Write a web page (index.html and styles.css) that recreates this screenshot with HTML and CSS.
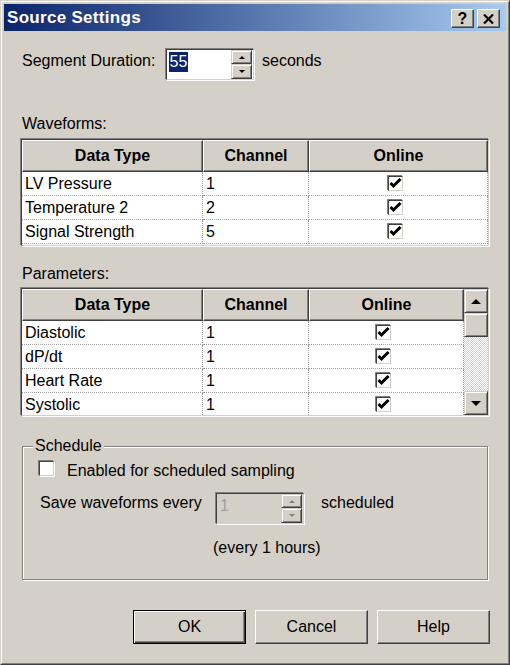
FILE: index.html
```html
<!DOCTYPE html>
<html>
<head>
<meta charset="utf-8">
<link rel="stylesheet" href="styles.css">
</head>
<body>
<div class="window">
  <div class="frame">
    <div class="titlebar">
      <span class="title">Source Settings</span>
      <div class="tbtns">
        <div class="tbtn">?</div>
        <div class="tbtn"><svg width="11" height="10" viewBox="0 0 11 10"><path d="M1 0.5 L10 9.5 M10 0.5 L1 9.5" stroke="#000" stroke-width="2.2" fill="none"/></svg></div>
      </div>
    </div>
    <div class="content">
      <div class="seg-row">
        <span class="seg-lbl">Segment Duration:</span>
        <div class="sunken spin">
          <span class="spin-val"><span class="sel">55</span></span>
          <div class="spin-btns">
            <div class="sbtn"><span class="arr-up"></span></div>
            <div class="sbtn"><span class="arr-down"></span></div>
          </div>
        </div>
        <span class="seg-unit">seconds</span>
      </div>

      <div class="section-lbl first">Waveforms:</div>
      <div class="sunken listview wave">
        <div class="hdr">
          <div class="hcell">Data Type</div>
          <div class="hcell">Channel</div>
          <div class="hcell">Online</div>
        </div>
        <div class="row"><div class="cell">LV Pressure</div><div class="cell">1</div><div class="cell chk"><span class="sunken cb"><svg width="13" height="13" viewBox="0 0 13 13"><polyline points="1.5,6 4.5,9 11.5,2" fill="none" stroke="#000" stroke-width="3"/></svg></span></div></div>
        <div class="row"><div class="cell">Temperature 2</div><div class="cell">2</div><div class="cell chk"><span class="sunken cb"><svg width="13" height="13" viewBox="0 0 13 13"><polyline points="1.5,6 4.5,9 11.5,2" fill="none" stroke="#000" stroke-width="3"/></svg></span></div></div>
        <div class="row"><div class="cell">Signal Strength</div><div class="cell">5</div><div class="cell chk"><span class="sunken cb"><svg width="13" height="13" viewBox="0 0 13 13"><polyline points="1.5,6 4.5,9 11.5,2" fill="none" stroke="#000" stroke-width="3"/></svg></span></div></div>
      </div>

      <div class="section-lbl second">Parameters:</div>
      <div class="sunken listview params">
        <div class="grid-part">
          <div class="hdr">
            <div class="hcell">Data Type</div>
            <div class="hcell">Channel</div>
            <div class="hcell">Online</div>
          </div>
          <div class="row"><div class="cell">Diastolic</div><div class="cell">1</div><div class="cell chk"><span class="sunken cb"><svg width="13" height="13" viewBox="0 0 13 13"><polyline points="1.5,6 4.5,9 11.5,2" fill="none" stroke="#000" stroke-width="3"/></svg></span></div></div>
          <div class="row"><div class="cell">dP/dt</div><div class="cell">1</div><div class="cell chk"><span class="sunken cb"><svg width="13" height="13" viewBox="0 0 13 13"><polyline points="1.5,6 4.5,9 11.5,2" fill="none" stroke="#000" stroke-width="3"/></svg></span></div></div>
          <div class="row"><div class="cell">Heart Rate</div><div class="cell">1</div><div class="cell chk"><span class="sunken cb"><svg width="13" height="13" viewBox="0 0 13 13"><polyline points="1.5,6 4.5,9 11.5,2" fill="none" stroke="#000" stroke-width="3"/></svg></span></div></div>
          <div class="row"><div class="cell">Systolic</div><div class="cell">1</div><div class="cell chk"><span class="sunken cb"><svg width="13" height="13" viewBox="0 0 13 13"><polyline points="1.5,6 4.5,9 11.5,2" fill="none" stroke="#000" stroke-width="3"/></svg></span></div></div>
          <div class="row"><div class="cell"></div><div class="cell"></div><div class="cell chk"><span class="sunken cb"></span></div></div>
        </div>
        <div class="vscroll">
          <div class="sb-btn"><span class="big-up"></span></div>
          <div class="sb-btn thumb"></div>
          <div class="track"></div>
          <div class="sb-btn"><span class="big-down"></span></div>
        </div>
      </div>

      <fieldset class="group">
        <legend>Schedule</legend>
        <div class="cb-row">
          <span class="sunken cb"></span>
          <span class="cb-lbl">Enabled for scheduled sampling</span>
        </div>
        <div class="save-row">
          <span class="save-lbl">Save waveforms every</span>
          <div class="sunken spin disabled">
            <span class="spin-val"><span class="dis-val">1</span></span>
            <div class="spin-btns">
              <div class="sbtn"><span class="arr-up dis"></span></div>
              <div class="sbtn"><span class="arr-down dis"></span></div>
            </div>
          </div>
          <span class="save-unit">scheduled</span>
        </div>
        <div class="every">(every 1 hours)</div>
      </fieldset>

      <div class="btnrow">
        <div class="btn default">OK</div>
        <div class="btn">Cancel</div>
        <div class="btn">Help</div>
      </div>
    </div>
  </div>
</div>
</body>
</html>
```

FILE: styles.css
```css
* { box-sizing: border-box; }
html, body { margin: 0; padding: 0; }
body {
  font-family: "Liberation Sans", Arial, sans-serif;
  font-size: 16px;
  line-height: 18px;
  color: #000;
  background: #d4d0c8;
}
.window {
  width: 510px;
  height: 665px;
  border: 1px solid;
  border-color: #d4d0c8 #404040 #404040 #d4d0c8;
  background: #d4d0c8;
}
.frame {
  height: 100%;
  border: 1px solid;
  border-color: #fff #808080 #808080 #fff;
  padding: 2px;
  display: flex;
  flex-direction: column;
}
.titlebar {
  height: 27px;
  flex: none;
  background: linear-gradient(to right, #0a246a, #a6caf0);
  display: flex;
  align-items: flex-start;
  padding: 0 6px 0 3px;
}
.title {
  flex: 1;
  color: #fff;
  font-weight: bold;
  font-size: 17px;
  line-height: 27px;
  letter-spacing: 0.3px;
}
.tbtns { display: flex; gap: 3px; margin-top: 5px; }
.tbtn {
  width: 23px;
  height: 19px;
  background: #d4d0c8;
  border: 1px solid;
  border-color: #fff #404040 #404040 #fff;
  box-shadow: inset -1px -1px #808080;
  display: flex;
  align-items: center;
  justify-content: center;
  font-weight: bold;
  font-size: 16px;
  line-height: 16px;
}
.content { padding: 0 16px; }

/* common bevels */
.sunken {
  border: 1px solid;
  border-color: #404040 #d4d0c8 #d4d0c8 #404040;
  box-shadow: -1px -1px #808080, 1px 1px #fff;
  margin: 1px;
  background: #fff;
}

/* segment row */
.seg-row { display: flex; align-items: flex-start; margin-top: 17px; }
.seg-lbl { width: 143px; margin-left: 2px; margin-top: 4px; white-space: nowrap; }
.seg-unit { margin-left: 7px; margin-top: 4px; }
.spin {
  width: 88px;
  height: 31px;
  display: flex;
  justify-content: space-between;
}
.spin-val { padding: 2px 0 0 2px; }
.sel {
  display: inline-block;
  background: #0a246a;
  color: #fff;
  line-height: 20px;
  padding: 0 0.5px;
}
.spin-btns {
  width: 21px;
  margin-right: 1px;
  display: flex;
  flex-direction: column;
}
.sbtn {
  background: #d4d0c8;
  border: 1px solid;
  border-color: #d4d0c8 #404040 #404040 #d4d0c8;
  box-shadow: inset 1px 1px #fff, inset -1px -1px #808080;
  display: flex;
  align-items: center;
  justify-content: center;
}
.sbtn:first-child { height: 14px; }
.sbtn:last-child { height: 15px; }
.arr-up, .arr-down { width: 0; height: 0; border-left: 3px solid transparent; border-right: 3px solid transparent; }
.arr-up { border-bottom: 3px solid #000; }
.arr-down { border-top: 3px solid #000; }
.arr-up.dis { border-bottom-color: #808080; }
.arr-down.dis { border-top-color: #808080; }

/* section labels */
.section-lbl { margin-left: 2px; }
.section-lbl.first { margin-top: 34px; }
.section-lbl.second { margin-top: 19px; }

/* list views */
.listview { width: 468px; overflow: hidden; }
.listview.wave { height: 107px; margin-top: 6px; }
.listview.params { height: 128px; margin-top: 5px; display: flex; }
.grid-part { flex: 1; min-width: 0; }
.hdr, .row { display: grid; grid-template-columns: 181px 106px 1fr; }
.hdr { height: 32px; }
.hcell {
  background: #d4d0c8;
  border: 1px solid;
  border-color: #fff #404040 #404040 #fff;
  box-shadow: inset -1px -1px #808080;
  font-weight: bold;
  text-align: center;
  line-height: 29px;
  white-space: nowrap;
}
.row { height: 24px; }
.cell {
  border-right: 1px dotted #a0a0a0;
  border-bottom: 1px dotted #a0a0a0;
  padding-left: 3px;
  line-height: 23px;
  white-space: nowrap;
  overflow: hidden;
}
.cell.chk {
  display: flex;
  justify-content: center;
  align-items: center;
  padding: 0 6px 0 0;
}
.cb {
  display: flex;
  width: 15px;
  height: 15px;
  flex: none;
  overflow: visible;
}
.cb svg { display: block; flex: none; }

/* scrollbar */
.vscroll { width: 24px; flex: none; display: flex; flex-direction: column; }
.sb-btn {
  height: 24px;
  flex: none;
  background: #d4d0c8;
  border: 1px solid;
  border-color: #d4d0c8 #404040 #404040 #d4d0c8;
  box-shadow: inset 1px 1px #fff, inset -1px -1px #808080;
  display: flex;
  align-items: center;
  justify-content: center;
}
.track {
  flex: 1;
  background: repeating-conic-gradient(#fff 0 25%, #d4d0c8 0 50%) 0 0 / 2px 2px;
}
.big-up, .big-down { width: 0; height: 0; border-left: 5px solid transparent; border-right: 5px solid transparent; }
.big-up { border-bottom: 5px solid #000; }
.big-down { border-top: 5px solid #000; }

/* group box */
.group {
  margin: 21px 2px 0;
  padding: 0 0 22px;
  border: 1px solid #808080;
  box-shadow: inset 1px 1px #fff, 1px 1px #fff;
  min-width: 0;
}
.group legend {
  margin-left: 10px;
  padding: 0 2px;
  background: #d4d0c8;
  line-height: 18px;
}
.cb-row { display: flex; align-items: flex-start; margin-top: 5px; margin-left: 15px; }
.cb-lbl { margin-left: 12px; margin-top: 2px; }
.save-row { display: flex; align-items: flex-start; margin-top: 12px; margin-left: 17px; }
.save-lbl { width: 175px; margin-top: 2px; white-space: nowrap; }
.spin.disabled { background: #d4d0c8; }
.dis-val { color: #a0a0a0; line-height: 20px; padding-left: 1px; }
.save-unit { margin-left: 16px; margin-top: 2px; }
.every { margin-top: 14px; margin-left: 190px; }

/* buttons */
.btnrow { display: flex; justify-content: flex-end; gap: 9px; margin-top: 30px; }
.btn {
  width: 113px;
  height: 34px;
  background: #d4d0c8;
  border: 1px solid;
  border-color: #fff #404040 #404040 #fff;
  box-shadow: inset -1px -1px #808080;
  display: flex;
  align-items: center;
  justify-content: center;
}
.btn.default {
  border-color: #000;
  box-shadow: inset 1px 1px #fff, inset -1px -1px #404040, inset -2px -2px #808080;
}
```
